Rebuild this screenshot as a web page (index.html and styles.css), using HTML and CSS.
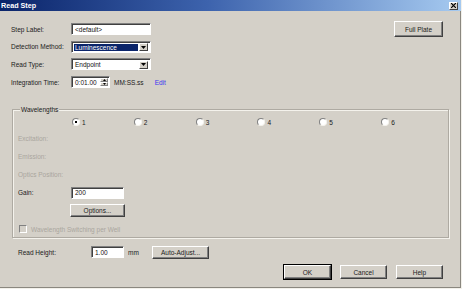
FILE: index.html
```html
<!DOCTYPE html>
<html lang="en">
<head>
    <meta charset="UTF-8">
    <title>Read Step</title>
    <link rel="stylesheet" href="styles.css">
</head>
<body>
    <div class="window">
        <div class="titlebar">
            <span class="title">Read Step</span>
            <span class="close-btn">
                <svg width="5" height="5" viewBox="0 0 5 5"><path d="M0,0L5,5M5,0L0,5" stroke="#000" stroke-width="1.2"/></svg>
            </span>
        </div>

        <div class="content">
            <div class="top">
                <div class="fields">
                    <span class="label">Step Label:</span>
                    <div class="textbox wide">&lt;default&gt;</div>

                    <span class="label">Detection Method:</span>
                    <div class="combo">
                        <span class="combo-value selected">Luminescence</span>
                        <span class="combo-arrow"><svg width="5" height="3" viewBox="0 0 5 3"><path d="M0,0H5L2.5,3Z" fill="#000"/></svg></span>
                    </div>

                    <span class="label">Read Type:</span>
                    <div class="combo">
                        <span class="combo-value">Endpoint</span>
                        <span class="combo-arrow"><svg width="5" height="3" viewBox="0 0 5 3"><path d="M0,0H5L2.5,3Z" fill="#000"/></svg></span>
                    </div>

                    <span class="label">Integration Time:</span>
                    <div class="time-row">
                        <div class="spin">
                            <span class="spin-value">0:01.00</span>
                            <span class="spin-btns">
                                <span class="spin-btn"><svg width="3" height="2" viewBox="0 0 3 2"><path d="M0,2H3L1.5,0Z" fill="#000"/></svg></span>
                                <span class="spin-btn"><svg width="3" height="2" viewBox="0 0 3 2"><path d="M0,0H3L1.5,2Z" fill="#000"/></svg></span>
                            </span>
                        </div>
                        <span class="units">MM:SS.ss</span>
                        <span class="edit-link">Edit</span>
                    </div>
                </div>
                <button class="btn full-plate">Full Plate</button>
            </div>

            <!-- wavelengths group -->
            <div class="groupbox">
                <span class="groupbox-title">Wavelengths</span>
                <div class="radio-row">
                    <span class="radio-item"><span class="radio checked"></span>1</span>
                    <span class="radio-item"><span class="radio"></span>2</span>
                    <span class="radio-item"><span class="radio"></span>3</span>
                    <span class="radio-item"><span class="radio"></span>4</span>
                    <span class="radio-item"><span class="radio"></span>5</span>
                    <span class="radio-item"><span class="radio"></span>6</span>
                </div>
                <div class="group-rows">
                    <div class="group-row disabled">Excitation:</div>
                    <div class="group-row disabled">Emission:</div>
                    <div class="group-row disabled">Optics Position:</div>
                    <div class="group-row">
                        <span class="group-label">Gain:</span>
                        <div class="textbox gain">200</div>
                    </div>
                    <div class="group-row">
                        <span class="group-label"></span>
                        <button class="btn options">Options...</button>
                    </div>
                    <div class="group-row disabled">
                        <span class="checkbox"></span>
                        <span>Wavelength Switching per Well</span>
                    </div>
                </div>
            </div>

            <div class="read-height">
                <span class="rh-label">Read Height:</span>
                <div class="textbox height">1.00</div>
                <span class="rh-units">mm</span>
                <button class="btn auto-adjust">Auto-Adjust...</button>
            </div>

            <div class="footer">
                <button class="btn default">OK</button>
                <button class="btn">Cancel</button>
                <button class="btn">Help</button>
            </div>
        </div>
    </div>
</body>
</html>
```

FILE: styles.css
```css
* {
    margin: 0;
    padding: 0;
    box-sizing: border-box;
}

body {
    font-family: "Liberation Sans", Arial, sans-serif;
    font-size: 6.5px;
    color: #1a1a1a;
    background: #d4d0c8;
}

.window {
    width: 462px;
    height: 289px;
    background: #d4d0c8;
    border-right: 1px solid #f2f0ea;
    border-bottom: 1px solid #f2f0ea;
    box-shadow: inset -1px -1px 0 #8a877f;
    overflow: hidden;
}

.titlebar {
    height: 11px;
    display: flex;
    align-items: center;
    justify-content: space-between;
    padding: 0 3px 0 1px;
    background: linear-gradient(to right, #0a246a, #3d63ad 45%, #a6caf0);
}

.title {
    color: white;
    font-weight: bold;
    font-size: 7.2px;
}

.close-btn {
    width: 9px;
    height: 8px;
    display: flex;
    align-items: center;
    justify-content: center;
    background: #d4d0c8;
    border: 1px solid;
    border-color: #fff #404040 #404040 #fff;
}

.content {
    padding-left: 11px;
}

.top {
    display: flex;
    justify-content: space-between;
    padding-right: 18px;
}

.fields {
    display: grid;
    grid-template-columns: 60px auto;
    grid-auto-rows: 12px;
    row-gap: 5.7px;
    align-items: center;
    margin-top: 12px;
}

.textbox,
.combo,
.spin {
    height: 12px;
    background: white;
    border: 1px solid;
    border-color: #808080 #fff #fff #808080;
    box-shadow: inset 1px 1px 0 #404040;
    display: flex;
    align-items: center;
    padding-left: 3px;
    color: #111;
}

.wide {
    width: 80px;
}

.combo {
    width: 80px;
    padding: 2px 2px 1px 2px;
}

.combo-value {
    flex: 1;
    height: 100%;
    display: flex;
    align-items: center;
    padding-left: 1px;
}

.combo-value.selected {
    background: #0a246a;
    color: white;
}

.combo-arrow {
    width: 9px;
    height: 8px;
    margin-left: 1px;
    display: flex;
    align-items: center;
    justify-content: center;
    background: #d4d0c8;
    border: 1px solid;
    border-color: #fff #404040 #404040 #fff;
}

.time-row {
    display: flex;
    align-items: center;
}

.spin {
    width: 39px;
    padding: 1px 1px 1px 3px;
}

.spin-value {
    flex: 1;
}

.spin-btns {
    width: 8px;
    height: 100%;
    display: flex;
    flex-direction: column;
}

.spin-btn {
    flex: 1;
    display: flex;
    align-items: center;
    justify-content: center;
    background: #d4d0c8;
    border: 1px solid;
    border-color: #fff #808080 #808080 #fff;
}

.units {
    margin-left: 4px;
}

.edit-link {
    margin-left: 11px;
    color: #3a36f0;
}

.btn {
    font-family: inherit;
    font-size: 6.5px;
    color: #1a1a1a;
    background: #d4d0c8;
    border: 1px solid;
    border-color: #fff #404040 #404040 #fff;
    box-shadow: inset -1px -1px 0 #808080;
    display: flex;
    align-items: center;
    justify-content: center;
}

.full-plate {
    width: 49px;
    height: 16px;
    margin-top: 10px;
}

.groupbox {
    width: 437px;
    height: 129px;
    margin: 21px 0 0 1px;
    border: 1px solid #aeaaa2;
    box-shadow: 1px 1px 0 #f4f2ec, inset 1px 1px 0 #f4f2ec;
    padding: 0 5px;
}

.groupbox-title {
    display: block;
    width: fit-content;
    margin: -4px 0 0 2px;
    padding: 0 1px;
    line-height: 8px;
    background: #d4d0c8;
}

.radio-row {
    display: flex;
    height: 10px;
    margin: 3px 0 0 54px;
}

.radio-item {
    width: 62.8px;
    display: flex;
    align-items: center;
    gap: 2px;
}

.radio {
    width: 8px;
    height: 8px;
    border-radius: 50%;
    background: white;
    border: 1px solid;
    border-color: #808080 #f4f2ec #f4f2ec #808080;
    display: flex;
    align-items: center;
    justify-content: center;
}

.radio.checked::after {
    content: "";
    width: 2px;
    height: 2px;
    background: #000;
}

.group-rows {
    display: flex;
    flex-direction: column;
    gap: 6.2px;
    margin-top: 5px;
}

.group-row {
    height: 12px;
    display: flex;
    align-items: center;
}

.disabled {
    color: #aaa69e;
}

.group-label {
    width: 53px;
}

.gain {
    width: 53px;
}

.options {
    width: 55px;
    height: 13px;
    margin-left: -1px;
}

.checkbox {
    width: 8px;
    height: 8px;
    margin: 0 4px 0 1px;
    border: 1px solid;
    border-color: #808080 #fff #fff #808080;
    background: #d4d0c8;
}

.read-height {
    display: flex;
    align-items: center;
    height: 12px;
    margin-top: 8px;
    padding-left: 7px;
}

.rh-label {
    width: 73px;
}

.height {
    width: 33px;
}

.rh-units {
    margin-left: 4px;
    width: 24px;
}

.auto-adjust {
    width: 57px;
    height: 13px;
}

.footer {
    display: flex;
    justify-content: flex-end;
    gap: 9px;
    margin-top: 7px;
    padding-right: 18px;
}

.footer .btn {
    width: 47px;
    height: 14px;
}

.footer .default {
    outline: 1px solid #000;
    outline-offset: 0;
    border-color: #fff #404040 #404040 #fff;
}
```
